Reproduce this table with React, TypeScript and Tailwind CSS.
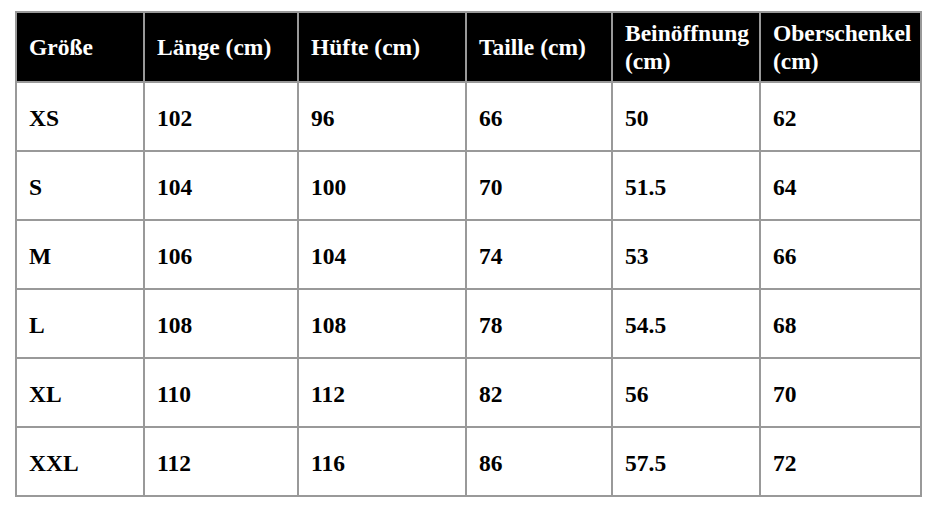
const HEADERS = ["Größe", "Länge (cm)", "Hüfte (cm)", "Taille (cm)", "Beinöffnung (cm)", "Oberschenkel (cm)"];

const ROWS = [
  ["XS", "102", "96", "66", "50", "62"],
  ["S", "104", "100", "70", "51.5", "64"],
  ["M", "106", "104", "74", "53", "66"],
  ["L", "108", "108", "78", "54.5", "68"],
  ["XL", "110", "112", "82", "56", "70"],
  ["XXL", "112", "116", "86", "57.5", "72"],
];

export default function App() {
  return (
    <div className="w-[939px] h-[528px] bg-white pl-[15px] pt-[11px] font-['Liberation_Serif',_'Times_New_Roman',_serif] font-bold text-[23.5px]">
      <div
        role="table"
        className="grid w-[907px] grid-cols-[126px_152px_166px_144px_146px_159px] grid-rows-[68px_repeat(6,67px)] gap-[2px] p-[2px] bg-[#999999]"
      >
        {HEADERS.map((h) => (
          <div
            key={h}
            role="columnheader"
            className="flex items-center bg-black pl-3 pr-2 pt-[1px] text-white leading-[1.17]"
          >
            <span>{h}</span>
          </div>
        ))}
        {ROWS.map((row) =>
          row.map((cell, i) => (
            <div
              key={row[0] + i}
              role="cell"
              className="flex items-center bg-white pl-3 pt-[5px] text-black leading-[1.17]"
            >
              {cell}
            </div>
          ))
        )}
      </div>
    </div>
  );
}
